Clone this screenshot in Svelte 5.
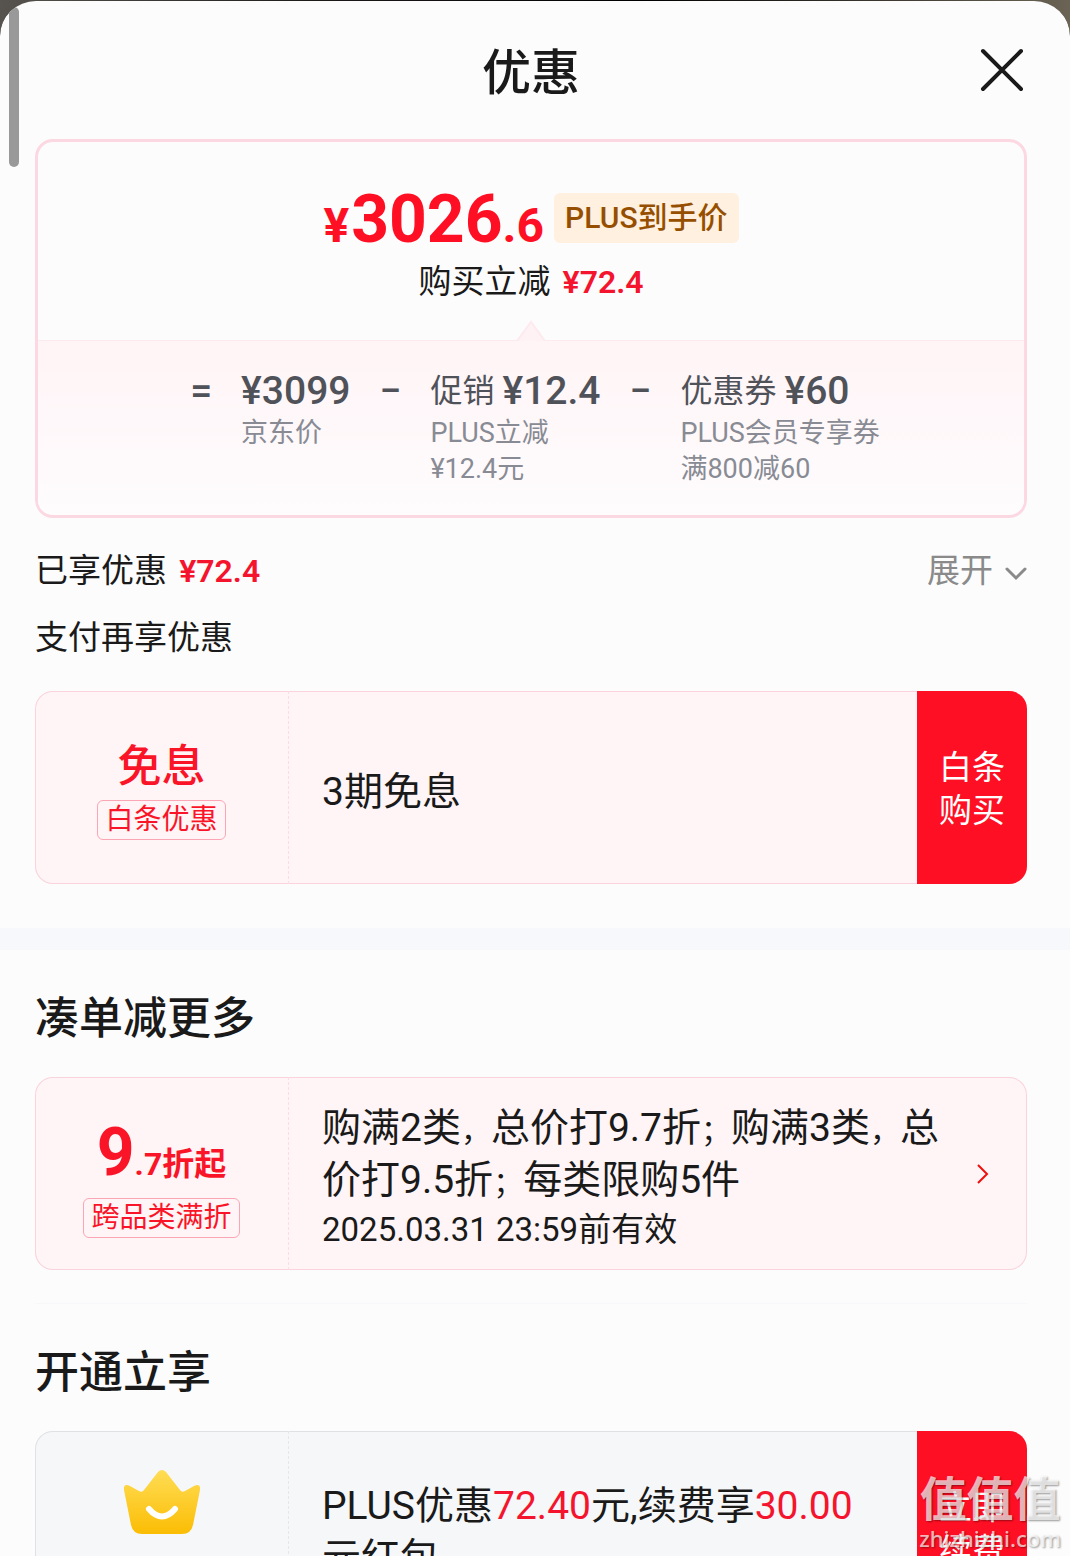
<script>
  const deductions = [
    { op: "=", name: "", amount: "¥3099", notes: ["京东价"] },
    { op: "−", name: "促销", amount: "¥12.4", notes: ["PLUS立减", "¥12.4元"] },
    { op: "−", name: "优惠券", amount: "¥60", notes: ["PLUS会员专享券", "满800减60"] },
  ];

  let open = $state(true);
  let expanded = $state(false);
</script>

{#if open}
  <main class="sheet">
    <div class="scrollbar"></div>

    <header class="head">
      <h1>优惠</h1>
      <button class="close" aria-label="关闭" onclick={() => (open = false)}>
        <svg width="44" height="44" viewBox="0 0 44 44">
          <path d="M3 3 41 41M41 3 3 41" fill="none" stroke="#1a1a1a" stroke-width="4" stroke-linecap="round" />
        </svg>
      </button>
    </header>

    <section class="block">
      <div class="summary">
        <div class="final">
          <div class="price-row">
            <span class="price"><small class="yen">¥</small>3026<small>.6</small></span>
            <span class="badge">PLUS到手价</span>
          </div>
          <p class="saved">购买立减 <b>¥72.4</b></p>
          <svg class="notch" width="30" height="21" viewBox="0 0 30 21">
            <path d="M1 21 15 2 29 21" fill="#fff2f5" stroke="#fdeaef" stroke-width="2" />
          </svg>
        </div>
        <div class="formula">
          {#each deductions as d}
            <span class="op">{d.op}</span>
            <div class="term">
              <div class="term-main">
                {#if d.name}<span>{d.name}</span>{/if}
                <b>{d.amount}</b>
              </div>
              {#each d.notes as note}
                <div class="note">{note}</div>
              {/each}
            </div>
          {/each}
        </div>
      </div>

      <div class="line">
        <p>已享优惠 <b>¥72.4</b></p>
        <button class="expand" aria-expanded={expanded} onclick={() => (expanded = !expanded)}>
          展开
          <svg width="22" height="14" viewBox="0 0 22 14">
            <path d="M2 2 11 11 20 2" fill="none" stroke="#8a8a8a" stroke-width="3" stroke-linecap="round" />
          </svg>
        </button>
      </div>
      <p class="line">支付再享优惠</p>

      <article class="ticket">
        <div class="stub">
          <strong class="stub-title">免息</strong>
          <span class="tag">白条优惠</span>
        </div>
        <div class="info"><p>3期免息</p></div>
        <button class="action">白条<br />购买</button>
      </article>
    </section>

    <div class="band"></div>

    <section class="block">
      <h2>凑单减更多</h2>
      <article class="ticket">
        <div class="stub">
          <strong class="discount"><big>9</big>.7折起</strong>
          <span class="tag">跨品类满折</span>
        </div>
        <div class="info">
          <p>购满2类<i>，</i>总价打9.7折<i>；</i>购满3类<i>，</i>总价打9.5折<i>；</i>每类限购5件</p>
          <p class="date">2025.03.31 23:59前有效</p>
        </div>
        <button class="go" aria-label="去凑单">
          <svg width="12" height="20" viewBox="0 0 12 20">
            <path d="M1 1 10 10 1 19" fill="none" stroke="#f20d0d" stroke-width="2" />
          </svg>
        </button>
      </article>
    </section>

    <section class="block">
      <hr />
      <h2>开通立享</h2>
      <article class="ticket plain">
        <div class="stub">
          <svg class="crown" width="76" height="64" viewBox="0 0 76 64">
            <defs>
              <linearGradient id="gold" x1="0" y1="0" x2="0" y2="1">
                <stop offset="0" stop-color="#ffdd55" />
                <stop offset="1" stop-color="#fbbd04" />
              </linearGradient>
            </defs>
            <path
              d="M34 2Q38 -2 42 2L56 20Q58 23 61 21L70 16Q77 13 76 20L69 55Q67 64 58 64H18Q9 64 7 55L0 20Q-1 13 6 16L15 21Q18 23 20 20Z"
              fill="url(#gold)"
            />
            <path d="M25 39Q38 54 51 39" fill="none" stroke="#fff" stroke-width="6" stroke-linecap="round" />
          </svg>
        </div>
        <div class="info">
          <p>PLUS优惠<em>72.40</em>元,续费享<em>30.00</em>元红包</p>
        </div>
        <button class="action">立即<br />续费</button>
      </article>
    </section>

    <div class="watermark">
      <span class="wm-name">值值值</span>
      <span class="wm-site">zhizhizhi.com</span>
    </div>
  </main>
{/if}

<style>
  :global(body) {
    background: linear-gradient(90deg, #57534e, #1c1a19 30%, #000 60%, #6b6455);
  }
  .sheet {
    position: relative;
    box-sizing: border-box;
    height: 100vh;
    overflow: hidden;
    border-top: 1px solid transparent;
    border-radius: 36px 36px 0 0;
    background: #fcfcfd padding-box;
    color: #1a1a1a;
    font-family: Roboto, "Noto Sans CJK SC", sans-serif;
    font-size: 33px;
    line-height: 44px;
  }
  p, h1, h2 { margin: 0; }
  h1, h2, b, strong { font-weight: 500; }
  button {
    padding: 0;
    border: 0;
    background: none;
    font: inherit;
    cursor: pointer;
  }
  svg { display: block; }

  .scrollbar {
    position: absolute;
    top: 6px;
    left: 9px;
    width: 10px;
    height: 160px;
    border-radius: 5px;
    background: #999;
  }
  .head {
    display: grid;
    grid-template-columns: 44px 1fr 44px;
    align-items: center;
    height: 138px;
    padding: 0 46px 0 38px;
  }
  .head h1 {
    grid-column: 2;
    padding-top: 8px;
    font-size: 49px;
    line-height: 64px;
    text-align: center;
  }
  .block { padding: 0 43px 0 35px; }

  .summary {
    border: 3px solid #fcd8e2;
    border-radius: 18px;
    overflow: hidden;
  }
  .final {
    position: relative;
    display: flex;
    flex-direction: column;
    align-items: center;
    gap: 19px;
    padding: 51px 0 38px;
  }
  .price-row {
    display: flex;
    align-items: center;
    gap: 10px;
    height: 50px;
  }
  .price {
    padding-top: 10px;
    color: #ff0f23;
    font-size: 66px;
    font-weight: 700;
  }
  .price small { font-size: 48px; }
  .price .yen { margin-right: 2px; }
  .badge {
    padding: 0 11px;
    border-radius: 6px;
    background: #fff0df;
    color: #964f00;
    font-size: 30px;
    font-weight: 500;
    line-height: 50px;
  }
  .saved { line-height: 40px; }
  .saved b, .line b {
    margin-left: 4px;
    color: #f5142d;
    font-size: 32px;
    font-weight: 600;
  }
  .notch {
    position: absolute;
    bottom: -1px;
    left: calc(50% - 15px);
  }
  .formula {
    display: flex;
    justify-content: center;
    gap: 29px;
    padding: 28px 0 28px 8px;
    border-top: 1px solid #fceaee;
    background: linear-gradient(#fff4f6, #fefcfd);
    color: #505259;
    font-size: 32px;
  }
  .op, .term-main b {
    font-size: 39px;
    font-weight: 500;
  }
  .term-main {
    display: flex;
    gap: 8px;
    height: 46px;
  }
  .note {
    color: #888b94;
    font-size: 27px;
    line-height: 36px;
  }

  .line {
    display: flex;
    justify-content: space-between;
    margin-top: 23px;
  }
  .summary + .line { margin-top: 31px; }
  .expand {
    display: flex;
    align-items: center;
    gap: 12px;
    color: #8a8a8a;
  }
  .expand svg { margin-top: 6px; }

  .ticket {
    display: flex;
    min-height: 193px;
    border-radius: 18px;
    overflow: hidden;
    background: #fff5f6;
    box-shadow: inset 0 0 0 1px #fad3dc;
  }
  .line + .ticket { margin-top: 31px; }
  .stub {
    display: flex;
    flex: 0 0 253px;
    flex-direction: column;
    align-items: center;
    justify-content: center;
    gap: 6px;
    box-sizing: border-box;
    padding-top: 4px;
    color: #fa1428;
  }
  .stub-title {
    font-size: 44px;
    line-height: 54px;
  }
  .discount {
    margin-top: 12px;
    font-size: 32px;
    font-weight: 700;
    line-height: 56px;
  }
  .discount big { font-size: 66px; }
  .tag {
    padding: 0 7px;
    border: 1px solid #fba6b4;
    border-radius: 6px;
    font-size: 28px;
    line-height: 38px;
  }
  .info {
    display: flex;
    flex: 1;
    flex-direction: column;
    justify-content: center;
    padding: 8px 33px 0;
    border-left: 1px dashed #fbdde3;
    font-size: 39px;
    line-height: 52px;
  }
  .info i {
    font-size: 30px;
    font-style: normal;
    line-height: 1;
  }
  .date {
    font-size: 33px;
    line-height: 48px;
  }
  .action {
    flex: 0 0 110px;
    padding-top: 2px;
    background: #ff0f23;
    color: #fff;
    line-height: 43px;
  }
  .go { flex: 0 0 50px; }

  .band {
    height: 22px;
    margin-top: 44px;
    background: #f7f8fc;
  }
  h2 {
    padding: 39px 0 28px;
    font-size: 44px;
    line-height: 60px;
  }
  hr {
    margin: 33px 0 0;
    border: 0;
    border-top: 1px solid #f8f8fa;
  }

  .plain {
    background: #f6f7f9;
    box-shadow: inset 0 0 0 1px #dfe1e5;
  }
  .plain .info { border-color: #e6e7eb; }
  .plain .stub {
    justify-content: flex-start;
    padding-top: 39px;
  }
  em {
    color: #f5142d;
    font-style: normal;
  }

  .watermark {
    position: absolute;
    right: 9px;
    bottom: 4px;
    display: flex;
    flex-direction: column;
    align-items: center;
    color: rgba(255, 255, 255, 0.7);
    text-shadow: 1px 1px 2px rgba(0, 0, 0, 0.4);
    pointer-events: none;
  }
  .wm-name {
    font-size: 47px;
    font-weight: 700;
    line-height: 48px;
  }
  .wm-site {
    font-family: "Noto Sans", sans-serif;
    font-size: 22px;
    font-weight: 500;
    line-height: 28px;
  }
</style>
